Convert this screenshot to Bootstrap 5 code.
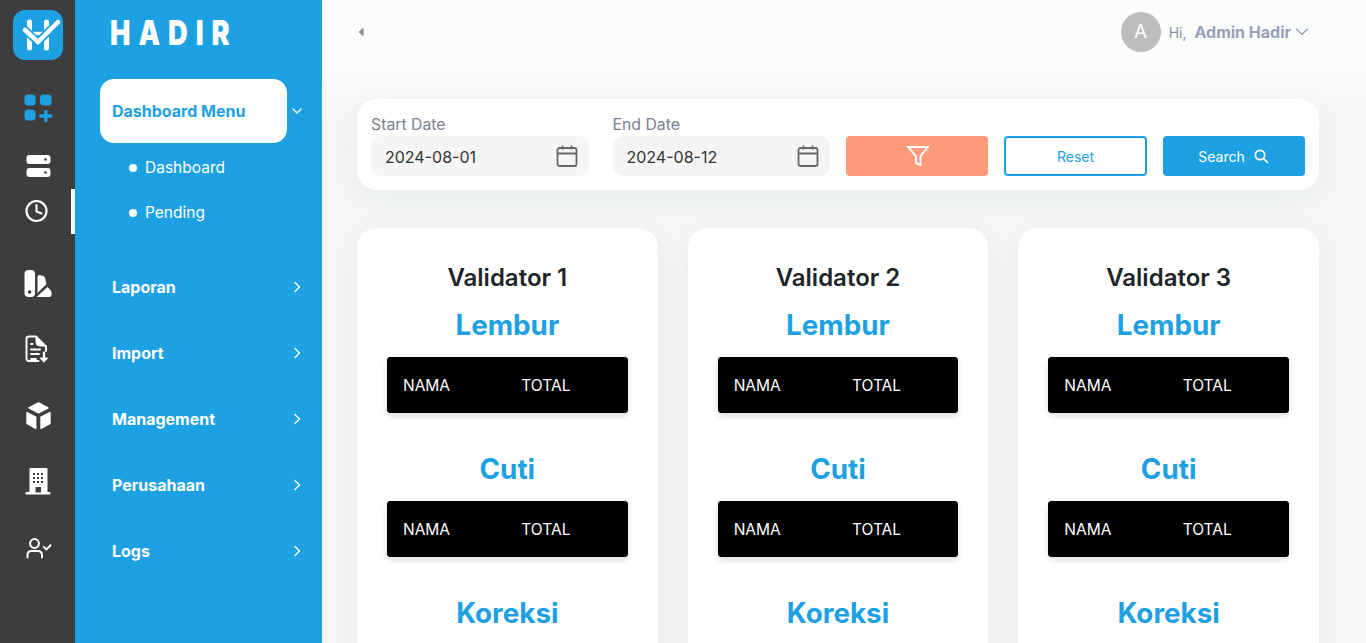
<!DOCTYPE html>
<html lang="id">
<head>
<meta charset="utf-8">
<title>Hadir</title>
<link rel="stylesheet" href="https://cdn.jsdelivr.net/npm/bootstrap@5.3.0/dist/css/bootstrap.min.css">
<style>
html,body{height:100%;overflow:hidden}
body{font-family:Inter,"Liberation Sans",sans-serif;background:#fafbfb;color:#212529}
.shell{height:643px;overflow:hidden}
.rail{width:75px;background:#3d3d3d;flex:none}
.rail-logo{width:50px;height:50px;background:#1da1e3;border-radius:12px;margin:10px 0 0 13px}
.rail-item{height:45px;width:75px;padding-left:22.5px;border-right:4px solid transparent}
.rail-item svg{display:block}
.rail-item.is-on{border-right-color:#fff}
.ri1{margin-top:25.5px}.ri2{margin-top:13px}.ri4{margin-top:28px}.ri5{margin-top:20px}.ri6{margin-top:22px}.ri7{margin-top:20px}.ri8{margin-top:22px}
.side{width:247px;background:#1da1e3;flex:none;color:#fff}
.brand{font-size:34px;line-height:40px;font-weight:900;letter-spacing:10px;margin:13px 0 0 35px;height:66px;transform:scaleX(.8);transform-origin:left center}
.menu-row{padding-left:37px;font-size:16px;font-weight:700;height:66px;padding-right:21px}
.menu-head{width:187px;height:64px;margin-left:25px;background:#fff;color:#1da1e3;border-radius:14px;padding-left:12px;font-size:16px;font-weight:700}
.menu-open{padding-right:19px}
.sub-row{height:45px;padding-left:54px;padding-top:2px;font-size:15.5px;font-weight:400;gap:8px}
.sub-dot{width:8px;height:8px;border-radius:50%;background:#fff}
.sub-list{margin-bottom:20px;margin-top:1px}
.main-pane{padding:0 47px 0 35px;min-width:0;background:linear-gradient(#fbfcfc 50px,#f4f6f7 120px)}
.top-strip{height:99px;padding-bottom:35px}
.user-box{margin-right:10px}
.avatar{width:40px;height:40px;border-radius:50%;background:#bdbdbd;color:#fff;font-size:19px}
.hi{color:#8a8f9f;font-size:14px;padding-top:1px}
.who{color:#9a9fb9;font-size:16px;font-weight:700}
.filter-box{background:#fff;border-radius:20px;height:91px;padding:14px;box-shadow:0 6px 30px rgba(40,60,80,.05)}
.field{flex:1 1 0;min-width:0}
.field-label{font-size:15.8px;line-height:20px;color:#7c808d;margin-bottom:1px;margin-top:2px}
.date-box{height:40px;background:#f5f5f5;border-radius:10px;padding:0 11px 0 14px}
.date-box input{border:0;background:transparent;width:100%;outline:0;font-size:16px;color:#333;padding:2px 0 0;font-family:inherit}
.act{width:142px;height:40px;border-radius:4px;font-size:14px;flex:none;padding:0}
.act-filter{background:#ff9a7b;border:0}
.act-reset{width:143px;background:#fff;border:2px solid #1da1e3;color:#1da1e3}
.act-search{background:#1da1e3;border:0;color:#fff}
.act-row{gap:16px;margin-left:-8px;margin-top:23px}
.val-grid{display:grid;grid-template-columns:repeat(3,1fr);gap:30px;margin-top:38px}
.val-box{background:#fff;border-radius:20px;padding:32px 30px 0;height:500px;box-shadow:0 6px 30px rgba(40,60,80,.05);text-align:center}
.val-title{font-size:24px;line-height:34px;font-weight:600;padding-top:1px;margin:0 0 11px;height:35px}
.val-sub{font-size:27.8px;line-height:38px;font-weight:700;color:#1da1e3;margin:0 0 13px}
.val-table{width:100%;table-layout:fixed;background:#000;color:#fff;border-radius:4px;box-shadow:0 3px 6px rgba(0,0,0,.14);margin-bottom:37px;border-collapse:separate;border-spacing:0;text-align:left}
.val-table th{font-weight:400;font-size:15.5px;height:56px;padding:2px 16px 0;background:#000;color:#fff;border:0}
.val-table th:first-child{border-radius:4px 0 0 4px}
.val-table th:last-child{border-radius:0 4px 4px 0;padding-left:14px}
</style>
</head>
<body>
<div class="shell d-flex">
  <nav class="rail">
    <div class="rail-logo">
      <svg width="50" height="50" viewBox="0 0 50 50"><g fill="none" stroke-linecap="round"><path d="M16.5 12V38M33.5 12V38" stroke="#fff" stroke-width="5"/><path d="M17 23.5H33" stroke="#fff" stroke-width="3.4" stroke-linecap="butt"/><path d="M12 20 25 32 45 12" stroke="#1da1e3" stroke-width="8"/><path d="M12 20 25 32 45 12" stroke="#fff" stroke-width="4.5"/></g></svg>
    </div>
    <div class="rail-item ri1 d-flex align-items-center"><svg width="30" height="30" viewBox="0 0 30 30" fill="#1da1e3"><rect x="1.5" y="1.5" width="11" height="11" rx="3.5"/><rect x="17" y="1.5" width="11.5" height="11" rx="3.5"/><rect x="1.5" y="16.5" width="11" height="11" rx="3.5"/><path d="M22.8 18.5v9M17.8 23h10" stroke="#1da1e3" stroke-width="3.4" stroke-linecap="round"/></svg></div>
    <div class="rail-item ri2 d-flex align-items-center"><svg width="30" height="30" viewBox="0 0 30 30" fill="#fff"><rect x="3.5" y="4" width="24" height="9" rx="3"/><rect x="3.5" y="17" width="24" height="9" rx="3"/><circle cx="22.5" cy="8.5" r="1.3" fill="#3d3d3d"/><circle cx="22.5" cy="21.5" r="1.3" fill="#3d3d3d"/></svg></div>
    <div class="rail-item is-on d-flex align-items-center"><svg width="30" height="30" viewBox="0 0 30 30" fill="none" stroke="#fff"><circle cx="13.5" cy="15" r="10" stroke-width="2.2"/><path d="M13.5 9V15.5L18.5 17.5" stroke-width="2" stroke-linecap="round" stroke-linejoin="round"/></svg></div>
    <div class="rail-item ri4 d-flex align-items-center"><svg width="30" height="30" viewBox="0 0 30 30" fill="#fff"><rect x="1.5" y="1" width="10.5" height="27" rx="4"/><circle cx="6.6" cy="23" r="1.8" fill="#3d3d3d"/><path d="M14.5 8Q14.5 6 16.5 6L20.5 7Q21.6 7.4 22 9L23.5 15 14.5 24Z"/><path d="M13.5 28 24.5 18 27 20.5Q28.5 22 28.5 24V25.5Q28.5 28 26 28Z"/></svg></div>
    <div class="rail-item ri5 d-flex align-items-center"><svg width="30" height="30" viewBox="0 0 30 30" fill="none" stroke="#fff" stroke-width="1.9" stroke-linecap="round" stroke-linejoin="round"><path d="M15.5 27H6Q3.5 27 3.5 24.5V5Q3.5 2.5 6 2.5H13L23 12.5V17"/><path d="M13 2.5V8Q13 12 17 12H23" fill="#fff" stroke-width="1"/><path d="M8 10H9.5M8 15.5H17M8 20H16M8 25H13"/><path d="M21 18.5V26" stroke-width="2.2"/><path d="M17.5 24H24.6L21 28Z" fill="#fff" stroke-width="1"/></svg></div>
    <div class="rail-item ri6 d-flex align-items-center"><svg width="30" height="30" viewBox="0 0 30 30" fill="#fff" stroke="#fff" stroke-width="1.4" stroke-linejoin="round"><path d="M15.5 1.8 25 6.8 15.5 11.8 6 6.8Z"/><path d="M4 11.5 12.7 16.2V27.5L4 22.5Z"/><path d="M18 16.2 27 11.5V22.5L18 27.5Z"/></svg></div>
    <div class="rail-item ri7 d-flex align-items-center"><svg width="30" height="30" viewBox="0 0 30 30" fill="#fff"><path d="M6.5 3Q6.5 2 7.5 2H23.5Q24.5 2 24.5 3V27H6.5Z"/><rect x="2.5" y="26" width="25" height="2.6" rx="1"/><g fill="#3d3d3d"><rect x="10" y="7" width="2" height="2"/><rect x="14" y="7" width="2" height="2"/><rect x="18" y="7" width="2" height="2"/><rect x="10" y="11" width="2" height="2"/><rect x="14" y="11" width="2" height="2"/><rect x="18" y="11" width="2" height="2"/><rect x="10" y="15" width="2" height="2"/><rect x="14" y="15" width="2" height="2"/><rect x="18" y="15" width="2" height="2"/><rect x="12.5" y="21" width="5.5" height="5.5"/></g></svg></div>
    <div class="rail-item ri8 d-flex align-items-center"><svg width="30" height="30" viewBox="0 0 30 30" fill="none" stroke="#fff" stroke-width="2" stroke-linecap="round" stroke-linejoin="round"><circle cx="11.5" cy="10.5" r="4.4"/><path d="M4.5 24.5V22Q4.5 18 8.5 18H14.5Q19 18 19 22V24.5"/><path d="M20.8 14 23.5 16.4 27.5 12.2"/></svg></div>
  </nav>
  <aside class="side">
    <div class="brand">HADIR</div>
    <div class="d-flex align-items-center menu-open">
      <div class="menu-head d-flex align-items-center flex-grow-0">Dashboard Menu</div>
      <svg class="ms-auto" width="12" height="12" viewBox="0 0 12 12" fill="none" stroke="#fff" stroke-width="1.4" stroke-linecap="round" stroke-linejoin="round"><path d="M2 4 6 8 10 4"/></svg>
    </div>
    <div class="sub-list">
      <div class="sub-row d-flex align-items-center"><span class="sub-dot"></span>Dashboard</div>
      <div class="sub-row d-flex align-items-center"><span class="sub-dot"></span>Pending</div>
    </div>
    <div class="menu-row d-flex align-items-center justify-content-between"><span>Laporan</span><svg width="8" height="12" viewBox="0 0 8 12" fill="none" stroke="#fff" stroke-width="1.4" stroke-linecap="round" stroke-linejoin="round"><path d="M2 1.5 6.5 6 2 10.5"/></svg></div>
    <div class="menu-row d-flex align-items-center justify-content-between"><span>Import</span><svg width="8" height="12" viewBox="0 0 8 12" fill="none" stroke="#fff" stroke-width="1.4" stroke-linecap="round" stroke-linejoin="round"><path d="M2 1.5 6.5 6 2 10.5"/></svg></div>
    <div class="menu-row d-flex align-items-center justify-content-between"><span>Management</span><svg width="8" height="12" viewBox="0 0 8 12" fill="none" stroke="#fff" stroke-width="1.4" stroke-linecap="round" stroke-linejoin="round"><path d="M2 1.5 6.5 6 2 10.5"/></svg></div>
    <div class="menu-row d-flex align-items-center justify-content-between"><span>Perusahaan</span><svg width="8" height="12" viewBox="0 0 8 12" fill="none" stroke="#fff" stroke-width="1.4" stroke-linecap="round" stroke-linejoin="round"><path d="M2 1.5 6.5 6 2 10.5"/></svg></div>
    <div class="menu-row d-flex align-items-center justify-content-between"><span>Logs</span><svg width="8" height="12" viewBox="0 0 8 12" fill="none" stroke="#fff" stroke-width="1.4" stroke-linecap="round" stroke-linejoin="round"><path d="M2 1.5 6.5 6 2 10.5"/></svg></div>
  </aside>
  <main class="main-pane flex-grow-1">
    <div class="top-strip d-flex align-items-center justify-content-between">
      <svg width="8" height="12" viewBox="0 0 8 12" fill="#7f8a96"><path d="M6.5 1.5V10.5L1.5 6Z"/></svg>
      <div class="d-flex align-items-center user-box">
        <span class="avatar d-flex align-items-center justify-content-center me-2">A</span>
        <span class="hi me-2">Hi,</span>
        <span class="who">Admin Hadir</span>
        <svg class="ms-1" width="14" height="10" viewBox="0 0 14 10" fill="none" stroke="#9a9fb9" stroke-width="1.4" stroke-linecap="round" stroke-linejoin="round"><path d="M1.5 2 7 7.5 12.5 2"/></svg>
      </div>
    </div>
    <div class="filter-box d-flex gap-4">
      <div class="field">
        <div class="field-label">Start Date</div>
        <div class="date-box d-flex align-items-center"><input type="text" value="2024-08-01" aria-label="Start Date">
          <svg class="flex-shrink-0" width="22" height="24" viewBox="0 0 22 24" fill="none" stroke="#666" stroke-width="1.8"><rect x="1.5" y="4" width="19" height="18" rx="2"/><path d="M1.5 9.5H20.5M6.5 1.5V5.5M15.5 1.5V5.5"/></svg></div>
      </div>
      <div class="field">
        <div class="field-label">End Date</div>
        <div class="date-box d-flex align-items-center"><input type="text" value="2024-08-12" aria-label="End Date">
          <svg class="flex-shrink-0" width="22" height="24" viewBox="0 0 22 24" fill="none" stroke="#666" stroke-width="1.8"><rect x="1.5" y="4" width="19" height="18" rx="2"/><path d="M1.5 9.5H20.5M6.5 1.5V5.5M15.5 1.5V5.5"/></svg></div>
      </div>
      <div class="d-flex act-row">
        <button class="btn act act-filter d-flex align-items-center justify-content-center" aria-label="Filter"><svg width="24" height="22" viewBox="0 0 24 22" fill="none" stroke="#fff" stroke-width="1.9" stroke-linejoin="miter"><path d="M3 2H23L15.5 11V20L11 18V11Z"/></svg></button>
        <button class="btn act act-reset">Reset</button>
        <button class="btn act act-search d-flex align-items-center justify-content-center gap-2">Search<svg width="17" height="17" viewBox="0 0 17 17" fill="none" stroke="#fff" stroke-width="1.7" stroke-linecap="round"><circle cx="7" cy="7" r="4.7"/><path d="M10.5 10.5 14.5 14.5"/></svg></button>
      </div>
    </div>
    <div class="val-grid">
      <section class="val-box">
        <h2 class="val-title">Validator 1</h2>
        <h3 class="val-sub">Lembur</h3>
        <table class="val-table"><thead><tr><th>NAMA</th><th>TOTAL</th></tr></thead></table>
        <h3 class="val-sub">Cuti</h3>
        <table class="val-table"><thead><tr><th>NAMA</th><th>TOTAL</th></tr></thead></table>
        <h3 class="val-sub">Koreksi</h3>
      </section>
      <section class="val-box">
        <h2 class="val-title">Validator 2</h2>
        <h3 class="val-sub">Lembur</h3>
        <table class="val-table"><thead><tr><th>NAMA</th><th>TOTAL</th></tr></thead></table>
        <h3 class="val-sub">Cuti</h3>
        <table class="val-table"><thead><tr><th>NAMA</th><th>TOTAL</th></tr></thead></table>
        <h3 class="val-sub">Koreksi</h3>
      </section>
      <section class="val-box">
        <h2 class="val-title">Validator 3</h2>
        <h3 class="val-sub">Lembur</h3>
        <table class="val-table"><thead><tr><th>NAMA</th><th>TOTAL</th></tr></thead></table>
        <h3 class="val-sub">Cuti</h3>
        <table class="val-table"><thead><tr><th>NAMA</th><th>TOTAL</th></tr></thead></table>
        <h3 class="val-sub">Koreksi</h3>
      </section>
    </div>
  </main>
</div>
<script src="https://cdn.jsdelivr.net/npm/bootstrap@5.3.0/dist/js/bootstrap.bundle.min.js"></script>
</body>
</html>
